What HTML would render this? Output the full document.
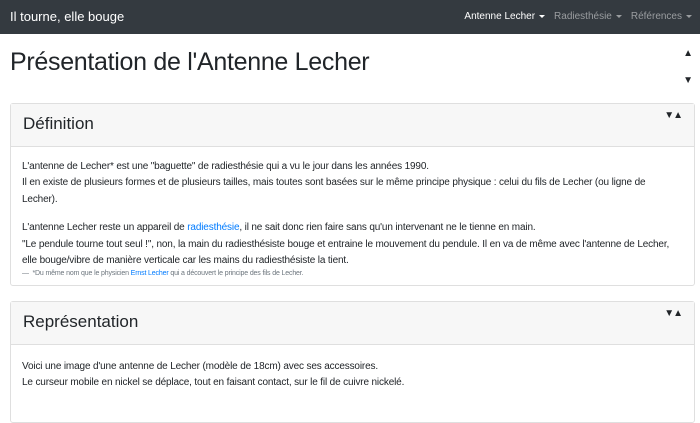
<!DOCTYPE html>
<html><head><meta charset="utf-8"><style>
body{margin:0;width:700px;height:400px;overflow:hidden;background:#fff;font-family:"Liberation Sans",sans-serif;color:#212529}
.nav{height:34px;background:#343a40;position:relative}
.brand{position:absolute;left:10px;top:9px;color:#fff;font-size:13px}
.links{position:absolute;right:8px;top:11px;font-size:10px;color:#9a9da0}
.links span{margin-left:9px}
.links .a{color:#fff}
.car{display:inline-block;width:0;height:0;border-left:3px solid transparent;border-right:3px solid transparent;border-top:3px solid currentColor;vertical-align:middle;margin-left:4px}
h1{position:absolute;left:10px;top:48px;margin:0;font-size:25px;font-weight:500;letter-spacing:-0.3px}
.arr{position:absolute;right:7px;font-size:10px}
.card{position:absolute;left:10px;width:683px;border:1px solid #dfdfdf;border-radius:3px}
.hd{height:42px;background:#f7f7f7;border-bottom:1px solid #dfdfdf;position:relative}
.hd h2{margin:0;position:absolute;left:12px;top:10px;font-size:17px;font-weight:500}
.hd .t{position:absolute;right:12px;top:6px;font-size:10px;letter-spacing:-1px}
.bd{padding:12px 11px;font-size:10px;line-height:16.4px;letter-spacing:-0.15px}
.bd p{margin:0 0 12px}
a{color:#007bff;text-decoration:none}
.sm{font-size:7px;color:#6c757d;line-height:9px}
</style></head><body>
<div class="nav"><div class="brand">Il tourne, elle bouge</div>
<div class="links"><span class="a">Antenne Lecher<i class="car"></i></span><span>Radiesthésie<i class="car"></i></span><span>Références<i class="car"></i></span></div></div>
<h1>Présentation de l'Antenne Lecher</h1>
<div class="arr" style="top:48px">▲</div><div class="arr" style="top:75px">▼</div>
<div class="card" style="top:103px;height:181px"><div class="hd"><h2>Définition</h2><div class="t">▼▲</div></div>
<div class="bd"><p>L'antenne de Lecher* est une "baguette" de radiesthésie qui a vu le jour dans les années 1990.<br>Il en existe de plusieurs formes et de plusieurs tailles, mais toutes sont basées sur le même principe physique : celui du fils de Lecher (ou ligne de Lecher).</p>L'antenne Lecher reste un appareil de <a>radiesthésie</a>, il ne sait donc rien faire sans qu'un intervenant ne le tienne en main.<br>"Le pendule tourne tout seul !", non, la main du radiesthésiste bouge et entraine le mouvement du pendule. Il en va de même avec l'antenne de Lecher, elle bouge/vibre de manière verticale car les mains du radiesthésiste la tient.<div class="sm">—&nbsp; *Du même nom que le physicien <a>Ernst Lecher</a> qui a découvert le principe des fils de Lecher.</div></div></div>
<div class="card" style="top:301px;height:120px"><div class="hd"><h2>Représentation</h2><div class="t">▼▲</div></div>
<div class="bd" style="padding-top:14px">Voici une image d'une antenne de Lecher (modèle de 18cm) avec ses accessoires.<br>Le curseur mobile en nickel se déplace, tout en faisant contact, sur le fil de cuivre nickelé.</div></div>
</body></html>
